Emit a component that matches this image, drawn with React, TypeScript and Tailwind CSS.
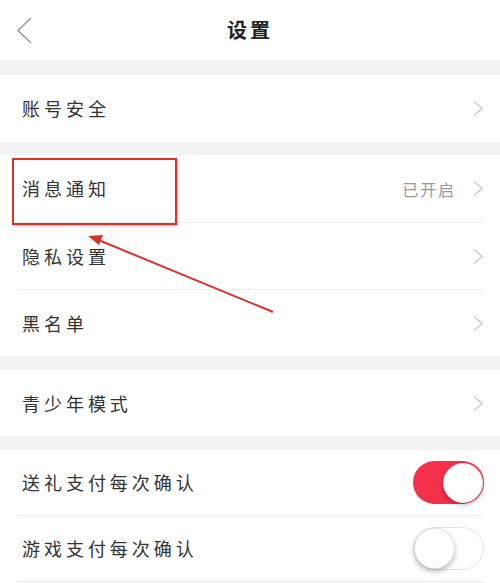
import React from "react";

const font = { fontFamily: '"Noto Sans CJK SC", "Noto Sans", sans-serif' };

function Chevron() {
  return (
    <svg width="12" height="17" viewBox="0 0 12 17" className="shrink-0">
      <polyline points="2,1.5 10,8.5 2,15.5" fill="none" stroke="#c9c9c9" strokeWidth="1.4" />
    </svg>
  );
}

function Row({
  label,
  h,
  right,
}: {
  label: string;
  h: string;
  right?: React.ReactNode;
}) {
  return (
    <div className={`bg-white ${h} pl-[22px] pr-[16px]`}>
      <div className="flex h-full items-center justify-between">
        <span className="text-[18px] tracking-[0.22em] text-[#333333]">{label}</span>
        {right ?? <Chevron />}
      </div>
    </div>
  );
}

function Divider() {
  return (
    <div className="bg-white">
      <div className="ml-[17px] mr-[16px] h-px bg-[#ececec]" />
    </div>
  );
}

function Band({ h }: { h: string }) {
  return <div className={`${h} bg-[#f3f3f3]`} />;
}

function ToggleOn() {
  return (
    <div className="relative flex h-[43px] w-[71px] items-center justify-end rounded-full bg-[#f4304b] pr-[1px]">
      <div className="h-[40px] w-[40px] rounded-full border border-[#e8e8e8] bg-white shadow-[0_2px_4px_rgba(0,0,0,0.25)]" />
    </div>
  );
}

function ToggleOff() {
  return (
    <div className="relative flex h-[43px] w-[71px] items-center rounded-full border border-[#e3e3e3] bg-white">
      <div className="h-[41px] w-[41px] rounded-full border border-[#e0e0e0] bg-white shadow-[0_3px_5px_rgba(0,0,0,0.25)]" />
    </div>
  );
}

export default function App() {
  return (
    <div className="relative w-[500px] h-[583px] overflow-hidden bg-white" style={font}>
      {/* header */}
      <div className="relative flex h-[60px] items-center justify-center bg-white">
        <svg width="18" height="28" viewBox="0 0 18 28" className="absolute left-[15px] top-[17px]">
          <polyline points="16,1 3,13.5 16,26" fill="none" stroke="#9a9a9a" strokeWidth="1.5" />
        </svg>
        <span className="text-[20px] font-bold tracking-[0.15em] text-[#222222]">设置</span>
      </div>
      <Band h="h-[15px]" />
      <Row label="账号安全" h="h-[67px]" />
      <Band h="h-[13px]" />
      <Row
        label="消息通知"
        h="h-[67px]"
        right={
          <div className="flex items-center gap-[16px]">
            <span className="text-[16px] tracking-[0.12em] text-[#9a9a9a]">已开启</span>
            <Chevron />
          </div>
        }
      />
      <Divider />
      <Row label="隐私设置" h="h-[66px]" />
      <Divider />
      <Row label="黑名单" h="h-[66px]" />
      <Band h="h-[14px]" />
      <Row label="青少年模式" h="h-[66px]" />
      <Band h="h-[14px]" />
      <Row label="送礼支付每次确认" h="h-[65px]" right={<ToggleOn />} />
      <Divider />
      <Row label="游戏支付每次确认" h="h-[65px]" right={<ToggleOff />} />
      <Divider />

      {/* annotation box */}
      <div className="absolute left-[12px] top-[158px] h-[67px] w-[165px] border-2 border-[#d8322f] shadow-[1px_1px_2px_rgba(0,0,0,0.3)]" />
      {/* annotation arrow */}
      <svg className="absolute left-0 top-0" width="500" height="583" viewBox="0 0 500 583">
        <line x1="273" y1="312" x2="96" y2="239" stroke="#d8322f" strokeWidth="2" />
        <polygon points="88,236 103,235 99,245" fill="#d8322f" />
      </svg>
    </div>
  );
}
